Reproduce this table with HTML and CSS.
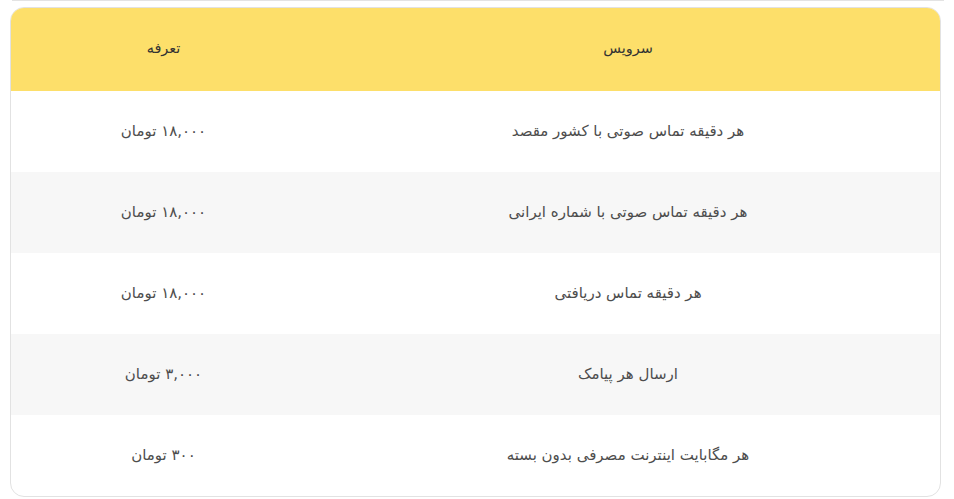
FILE: index.html
```html
<!DOCTYPE html>
<html lang="fa" dir="rtl">
<head>
<meta charset="utf-8">
<link rel="stylesheet" href="styles.css">
</head>
<body>
<div class="topline"></div>
<div class="wrap">
  <table class="tariffs">
    <thead>
      <tr><th class="svc">سرویس</th><th class="price">تعرفه</th></tr>
    </thead>
    <tbody>
      <tr><td>هر دقیقه تماس صوتی با کشور مقصد</td><td>۱۸,۰۰۰ تومان</td></tr>
      <tr><td>هر دقیقه تماس صوتی با شماره ایرانی</td><td>۱۸,۰۰۰ تومان</td></tr>
      <tr><td>هر دقیقه تماس دریافتی</td><td>۱۸,۰۰۰ تومان</td></tr>
      <tr><td>ارسال هر پیامک</td><td>۳,۰۰۰ تومان</td></tr>
      <tr><td>هر مگابایت اینترنت مصرفی بدون بسته</td><td>۳۰۰ تومان</td></tr>
    </tbody>
  </table>
</div>
</body>
</html>
```
FILE: styles.css
```css
html, body {
  margin: 0;
  padding: 0;
  background: #fff;
}
body {
  font-family: "DejaVu Sans", "Noto Sans", sans-serif;
  width: 954px;
  height: 499px;
  overflow: hidden;
}
.topline {
  height: 1px;
  background: #e3e3e3;
  margin-left: 12px;
  margin-right: 10px;
}
.wrap {
  margin: 6px 13px 0 10px;
  width: 931px;
  border: 1px solid #e2e2e2;
  border-radius: 14px;
  overflow: hidden;
  box-sizing: border-box;
}
.tariffs {
  width: 100%;
  border-collapse: collapse;
  table-layout: fixed;
}
.tariffs th {
  background: #fddf6a;
  height: 79px;
  font-weight: normal;
  font-size: 14.5px;
  color: #333;
  text-align: center;
  padding: 0 0 4px 0;
}
.tariffs th.svc { width: 624px; }
.tariffs td {
  height: 79px;
  text-align: center;
  font-size: 15px;
  color: #4d4d4d;
  padding: 0 0 2px 0;
}
.tariffs tbody tr:nth-child(even) td {
  background: #f7f7f7;
}
```
